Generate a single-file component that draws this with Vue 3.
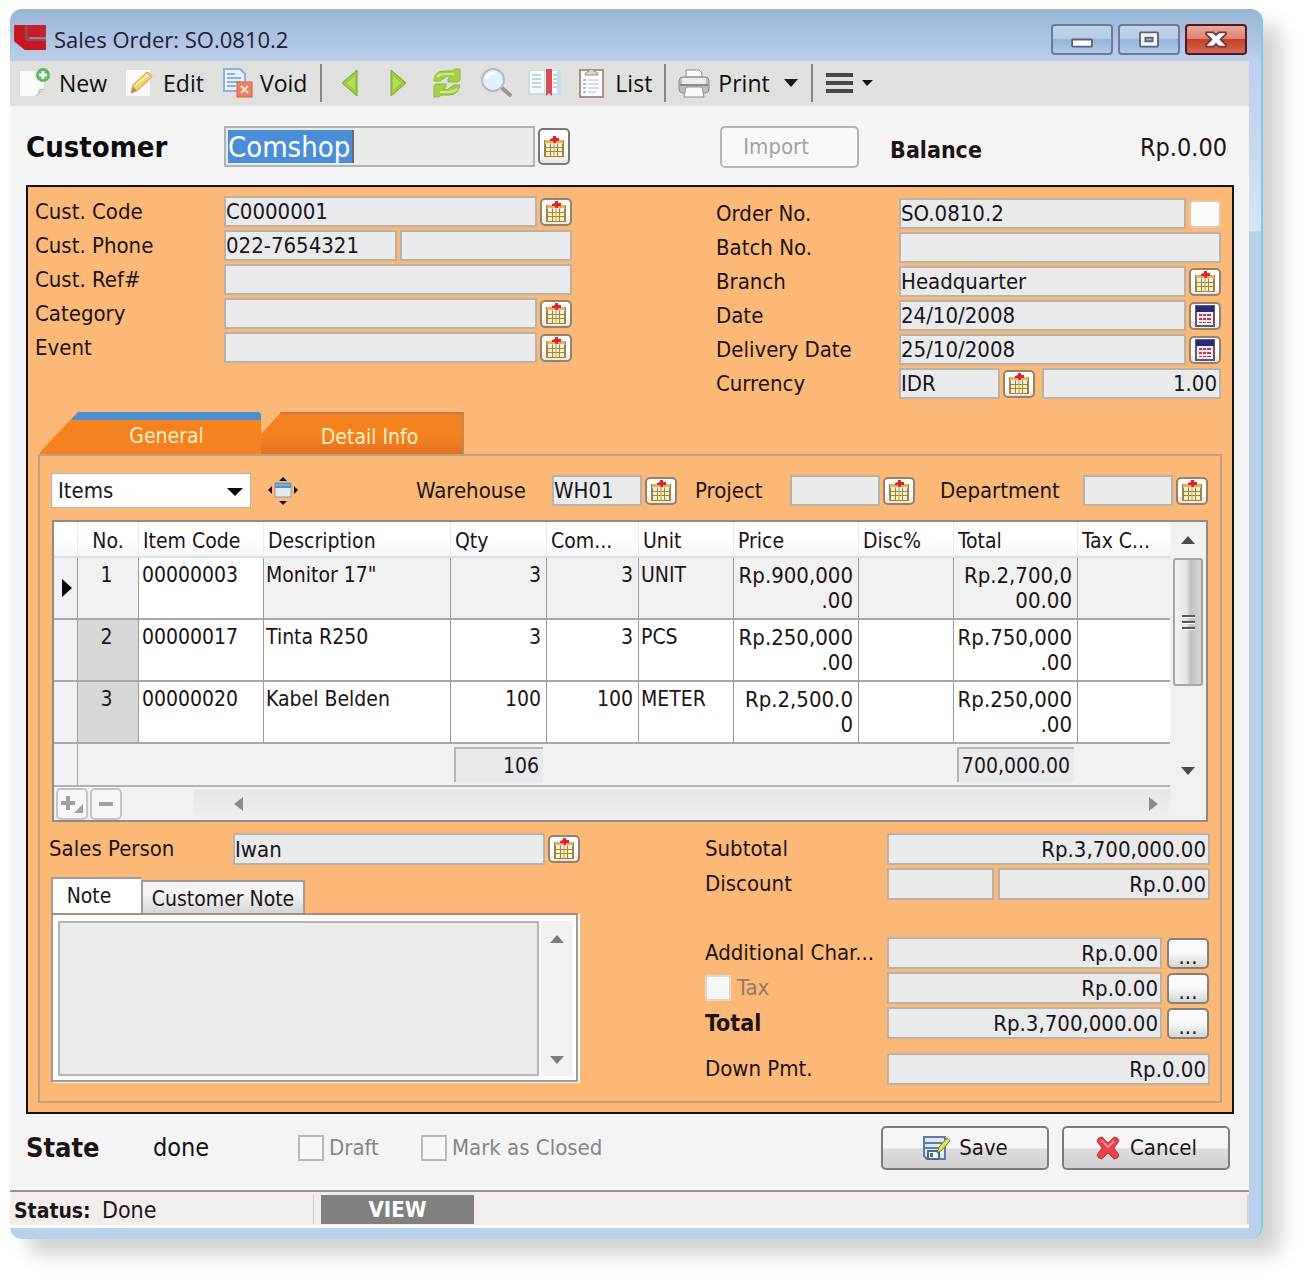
<script setup>
import { ref } from 'vue'

const leftFields = [
  { label: 'Cust. Code', id: 'cust-code', value: 'C0000001', lookup: true },
  { label: 'Cust. Phone', id: 'cust-phone', value: '022-7654321', second: true },
  { label: 'Cust. Ref#', id: 'cust-ref', value: '' },
  { label: 'Category', id: 'category', value: '', lookup: true },
  { label: 'Event', id: 'event', value: '', lookup: true }
]

const rightFields = [
  { label: 'Order No.', id: 'order-no', value: 'SO.0810.2', button: 'blank' },
  { label: 'Batch No.', id: 'batch-no', value: '' },
  { label: 'Branch', id: 'branch', value: 'Headquarter', button: 'lookup' },
  { label: 'Date', id: 'date', value: '24/10/2008', button: 'calendar' },
  { label: 'Delivery Date', id: 'delivery-date', value: '25/10/2008', button: 'calendar' }
]

const columns = [
  { title: '', width: 24 },
  { title: 'No.', width: 61, center: true },
  { title: 'Item Code', width: 125 },
  { title: 'Description', width: 187 },
  { title: 'Qty', width: 96 },
  { title: 'Com...', width: 92 },
  { title: 'Unit', width: 95 },
  { title: 'Price', width: 125 },
  { title: 'Disc%', width: 95 },
  { title: 'Total', width: 124 },
  { title: 'Tax C...', width: 94 }
]

const items = [
  { code: '00000003', name: 'Monitor 17"', qty: 3, com: 3, unit: 'UNIT', price: 'Rp.900,000.00', total: 'Rp.2,700,000.00' },
  { code: '00000017', name: 'Tinta R250', qty: 3, com: 3, unit: 'PCS', price: 'Rp.250,000.00', total: 'Rp.750,000.00' },
  { code: '00000020', name: 'Kabel Belden', qty: 100, com: 100, unit: 'METER', price: 'Rp.2,500.00', total: 'Rp.250,000.00' }
]

const current = ref(0)
const customer = ref('Comshop')
</script>

<template>
  <svg class="defs" aria-hidden="true">
    <symbol id="i-lookup" viewBox="0 0 22 22">
      <rect x="1" y="4" width="20" height="17" fill="#a08248" />
      <rect x="2" y="4" width="18" height="4" fill="#f0b04c" />
      <path d="M3 7h4v4H3zM8 7h6v4H8zM15 7h4v4h-4z" fill="#e6f1ea" />
      <path d="M3 12h4v3H3zM8 12h6v3H8zM15 12h4v3h-4zM3 16h4v4H3zM8 16h6v4H8zM15 16h4v4h-4z" fill="#fbf2b8" />
      <path d="M11 6v15" stroke="#b99c5c" stroke-width="1" />
      <path d="M10 0h3v2h3v3h-3v2h-2l-1-2H7V3l3-1z" fill="#e0202c" />
    </symbol>
    <symbol id="i-calendar" viewBox="0 0 22 22">
      <rect x="2" y="1" width="18" height="20" fill="#f7e9ec" stroke="#5c5a6b" stroke-width="2" />
      <rect x="2" y="1" width="18" height="6" fill="#262a78" />
      <path d="M5 9h3v2H5zM9 9h3v2H9zM13 9h4v2h-4zM5 13h3v2H5zM9 13h3v2H9zM13 13h4v2h-4zM5 17h3v1H5zM9 17h3v1H9zM13 17h4v1h-4z" fill="#b23a52" />
    </symbol>
  </svg>

  <main class="window">
    <header class="titlebar">
      <svg class="logo" viewBox="0 0 34 28" aria-hidden="true">
        <path d="M10 1h6v14h17v4H14q-4 0-4-5z" fill="#8f4a5c" />
        <path d="M0 1h11v13q0 4 4 4h18v9H11L0 18z" fill="#c8151f" />
        <path d="M14 1h19v13H17q-3 0-3-3z" fill="#c4202a" />
      </svg>
      <h1>Sales Order: SO.0810.2</h1>
      <div class="window-buttons">
        <button aria-label="Minimize">
          <svg viewBox="0 0 60 30"><rect x="19" y="15" width="22" height="8" rx="1" fill="#fff" stroke="#56617a" stroke-width="2" /></svg>
        </button>
        <button aria-label="Maximize">
          <svg viewBox="0 0 60 30"><rect x="20" y="7" width="20" height="16" rx="1" fill="#f6f6f8" stroke="#56617a" stroke-width="2" /><rect x="26" y="13" width="8" height="4" fill="#9fb6d4" stroke="#56617a" stroke-width="2" /></svg>
        </button>
        <button class="close" aria-label="Close">
          <svg viewBox="0 0 60 30"><path d="M19 7h8l3 3 3-3h8v2l-6 6 6 6v2h-8l-3-3-3 3h-8v-2l6-6-6-6z" fill="#fff" stroke="#6c3f48" stroke-width="2" /></svg>
        </button>
      </div>
    </header>

    <nav class="toolbar">
      <button class="tool new">
        <svg width="32" height="30" viewBox="0 0 32 30"><path d="M1 3h24v18l-8 7H1z" fill="#fbfbf9" /><path d="M17 28q3-1 3-6l5-1z" fill="#d9dcd8" stroke="#b7bbb5" /><circle cx="24" cy="7" r="7" fill="#5fb95c" /><path d="M24 3v8M20 7h8" stroke="#fff" stroke-width="3" /></svg>
        <span>New</span>
      </button>
      <button class="tool edit">
        <svg width="30" height="30" viewBox="0 0 30 30"><rect x="1" y="2" width="24" height="26" fill="#fbfbf9" /><path d="M6 25l2-8L22 4l5 5-14 13z" fill="#f3cf6a" stroke="#c99a3c" /><path d="M10 18L24 6" stroke="#fff0b4" stroke-width="2" /><path d="M21 5l3-1 4 4-2 2z" fill="#dcbba0" /><path d="M6 25l2-6 4 4z" fill="#a88f70" /></svg>
        <span>Edit</span>
      </button>
      <button class="tool void">
        <svg width="32" height="30" viewBox="0 0 32 30"><path d="M2 1h16l5 5v17H2z" fill="#e8f1fb" stroke="#8eb0dc" stroke-width="2" /><path d="M5 6h8M5 10h14M5 14h14M5 18h9" stroke="#8eb0dc" stroke-width="2" /><rect x="15" y="14" width="15" height="15" fill="#e8825f" stroke="#d9603c" /><path d="M19 18l7 7M26 18l-7 7" stroke="#fbe3da" stroke-width="2" /></svg>
        <span>Void</span>
      </button>
      <i class="divider"></i>
      <button class="tool arrow" aria-label="Previous"><svg width="20" height="30" viewBox="0 0 20 30"><path d="M17 2v26L2 15z" fill="#9bcc3c" stroke="#7aa63e" /><path d="M15 8v14L7 15z" fill="#b9de55" /></svg></button>
      <button class="tool arrow" aria-label="Next"><svg width="20" height="30" viewBox="0 0 20 30"><path d="M3 2v26l15-13z" fill="#9bcc3c" stroke="#7aa63e" /><path d="M5 8v14l8-7z" fill="#b9de55" /></svg></button>
      <button class="tool refresh" aria-label="Refresh"><svg width="30" height="30" viewBox="0 0 30 30"><path d="M2 12Q3 3 12 3h8l3-2h5v11l-2 2H16v-3l3-2q-5-2-8 2l-3 2H2z" fill="#a7cf45" stroke="#8ab73d" /><path d="M28 17q-2 10-11 10h-7l-4 2H2V18l2-2h10v3l-3 2q5 2 8-2l3-2z" fill="#a7cf45" stroke="#8ab73d" /><path d="M5 9q3-3 8-3h9M25 21q-3 3-8 3H8" fill="none" stroke="#d2e98b" stroke-width="2" /></svg></button>
      <button class="tool search" aria-label="Search"><svg width="34" height="30" viewBox="0 0 34 30"><path d="M22 19l9 8" stroke="#98989c" stroke-width="4" stroke-linecap="round" /><circle cx="14" cy="12" r="11" fill="#e4effb" stroke="#b6b9c6" stroke-width="2" /><path d="M7 11q2-6 9-6" fill="none" stroke="#fff" stroke-width="3" /></svg></button>
      <button class="tool book" aria-label="Bookmark"><svg width="34" height="30" viewBox="0 0 34 30"><rect x="0" y="2" width="33" height="25" fill="#c3e0ea" /><path d="M2 3h14v22H2zM17 3h12v22H17z" fill="#f8fafa" /><path d="M4 7h9M4 11h9M4 15h9M4 19h9M25 7h4M25 11h4M25 15h4M25 19h4" stroke="#c4d4da" stroke-width="2" /><path d="M18 1h6v27l-3-3-3 3z" fill="#e04a55" /></svg></button>
      <button class="tool list">
        <svg width="26" height="30" viewBox="0 0 26 30"><rect x="1" y="2" width="23" height="27" fill="#fcfdfb" stroke="#b08f82" stroke-width="2" /><path d="M6 7q0-3 4-4 2-4 5 0 4 1 4 4z" fill="#d8d5ce" stroke="#96918b" /><path d="M4 12h3M4 16h3M4 20h3M4 24h3" stroke="#9cc8bc" stroke-width="2" /><path d="M9 12h11M9 16h11M9 20h11M9 24h8" stroke="#d3e0e5" stroke-width="2" /></svg>
        <span>List</span>
      </button>
      <i class="divider"></i>
      <button class="tool print">
        <svg width="32" height="30" viewBox="0 0 32 30"><path d="M8 9V2h13l3 3v4z" fill="#fbfbfb" stroke="#8f8f8f" /><rect x="1" y="9" width="30" height="16" rx="4" fill="#bdbdbd" stroke="#8a8a8a" /><path d="M4 10h24v6H4z" fill="#ececec" /><path d="M2 17h28" stroke="#8b8b8b" stroke-width="2" /><path d="M8 19h16l2 10H6z" fill="#f8f8f8" stroke="#8f8f8f" /></svg>
        <span>Print</span>
        <svg width="14" height="8" viewBox="0 0 14 8"><path d="M0 0h14L7 8z" fill="#1a1a1a" /></svg>
      </button>
      <i class="divider"></i>
      <button class="tool menu" aria-label="Menu">
        <svg width="48" height="20" viewBox="0 0 48 20"><path d="M0 2h27M0 10h27M0 18h27" stroke="#474747" stroke-width="4" /><path d="M36 7h11l-6 6z" fill="#111" /></svg>
      </button>
    </nav>

    <section class="customer">
      <label class="big" for="customer">Customer</label>
      <div class="group">
        <div class="field"><input id="customer" v-model="customer" readonly /></div>
        <button class="pick" aria-label="Find customer"><svg><use href="#i-lookup" /></svg></button>
      </div>
      <button class="import" disabled>Import</button>
      <strong class="balance">Balance</strong>
      <output class="balance-value">Rp.0.00</output>
    </section>

    <section class="order">
      <div class="form">
        <div class="stack">
          <div v-for="f in leftFields" :key="f.id" class="row">
            <label :for="f.id">{{ f.label }}</label>
            <div class="group">
              <input :id="f.id" class="box" :value="f.value" readonly />
              <input v-if="f.second" class="box" aria-label="Second phone" readonly />
              <button v-if="f.lookup" class="pick" :aria-label="'Find ' + f.label"><svg><use href="#i-lookup" /></svg></button>
            </div>
          </div>
        </div>
        <div class="stack right">
          <div v-for="f in rightFields" :key="f.id" class="row">
            <label :for="f.id">{{ f.label }}</label>
            <div class="group">
              <input :id="f.id" class="box" :value="f.value" readonly />
              <button v-if="f.button" class="pick" :class="f.button" :aria-label="'Choose ' + f.label">
                <svg v-if="f.button !== 'blank'"><use :href="'#i-' + f.button" /></svg>
              </button>
            </div>
          </div>
          <div class="row">
            <label for="currency">Currency</label>
            <div class="group">
              <input id="currency" class="box code" value="IDR" readonly />
              <button class="pick" aria-label="Find currency"><svg><use href="#i-lookup" /></svg></button>
              <input class="box number rate" aria-label="Exchange rate" value="1.00" readonly />
            </div>
          </div>
        </div>
      </div>

      <div class="tabs" role="tablist">
        <button class="tab active" role="tab" aria-selected="true">General</button>
        <button class="tab detail" role="tab" aria-selected="false">Detail Info</button>
      </div>

      <div class="sheet">
        <div class="filters">
          <div class="select-wrap">
            <select aria-label="Line type"><option>Items</option></select>
            <svg width="16" height="8" viewBox="0 0 16 8" aria-hidden="true"><path d="M0 0h16L8 8z" fill="#0a0a0a" /></svg>
          </div>
          <button class="resize" aria-label="Resize columns">
            <svg width="32" height="28" viewBox="0 0 32 28"><path d="M16 0l4 4h-8zM16 28l4-4h-8zM1 13l4-4v8zM31 13l-4-4v8z" fill="#111" /><rect x="8" y="6" width="16" height="14" fill="#e3eaef" stroke="#8c98a3" /><rect x="8" y="6" width="16" height="5" fill="#4f93cf" /><path d="M9 8h14" stroke="#a5cdf0" /></svg>
          </button>
          <label class="wh" for="warehouse">Warehouse</label>
          <div class="group short"><input id="warehouse" class="box" value="WH01" readonly /><button class="pick" aria-label="Find warehouse"><svg><use href="#i-lookup" /></svg></button></div>
          <label class="pj" for="project">Project</label>
          <div class="group short"><input id="project" class="box" readonly /><button class="pick" aria-label="Find project"><svg><use href="#i-lookup" /></svg></button></div>
          <label class="dp" for="department">Department</label>
          <div class="group short"><input id="department" class="box" readonly /><button class="pick" aria-label="Find department"><svg><use href="#i-lookup" /></svg></button></div>
        </div>

        <div class="grid">
          <table>
            <colgroup><col v-for="c in columns" :key="c.title" :style="{ width: c.width + 'px' }" /></colgroup>
            <thead>
              <tr><th v-for="c in columns" :key="c.title" :class="{ center: c.center }">{{ c.title }}</th></tr>
            </thead>
            <tbody>
              <tr v-for="(item, i) in items" :key="item.code" :class="{ selected: i === current }">
                <td class="marker"><svg v-if="i === current" width="10" height="18" viewBox="0 0 10 18"><path d="M0 0l10 9-10 9z" fill="#050505" /></svg></td>
                <td class="index">{{ i + 1 }}</td>
                <td class="item-code">{{ item.code }}</td>
                <td>{{ item.name }}</td>
                <td class="num">{{ item.qty }}</td>
                <td class="num">{{ item.com }}</td>
                <td>{{ item.unit }}</td>
                <td class="num money">{{ item.price }}</td>
                <td></td>
                <td class="num money">{{ item.total }}</td>
                <td></td>
              </tr>
            </tbody>
            <tfoot>
              <tr>
                <td class="marker"></td>
                <td colspan="3"></td>
                <td class="sum"><span>106</span></td>
                <td colspan="4"></td>
                <td class="sum"><span>700,000.00</span></td>
                <td></td>
              </tr>
            </tfoot>
          </table>
          <div class="vscroll">
            <svg width="14" height="8" viewBox="0 0 14 8"><path d="M0 8h14L7 0z" fill="#4a4a4a" /></svg>
            <div class="thumb"><i></i><i></i><i></i></div>
            <svg class="down" width="14" height="8" viewBox="0 0 14 8"><path d="M0 0h14L7 8z" fill="#4a4a4a" /></svg>
          </div>
          <div class="grid-bar">
            <button class="row-btn" aria-label="Add row" disabled><svg width="24" height="20" viewBox="0 0 24 20"><path d="M8 2v14M1 9h14" stroke="#a0a0a0" stroke-width="4" /><path d="M23 10v9h-9z" fill="#a0a0a0" /></svg></button>
            <button class="row-btn" aria-label="Remove row" disabled><svg width="16" height="20" viewBox="0 0 16 20"><path d="M1 10h14" stroke="#a0a0a0" stroke-width="4" /></svg></button>
            <div class="hscroll">
              <svg width="9" height="14" viewBox="0 0 9 14"><path d="M9 0v14L0 7z" fill="#8c8c8c" /></svg>
              <svg width="9" height="14" viewBox="0 0 9 14"><path d="M0 0v14l9-7z" fill="#8c8c8c" /></svg>
            </div>
          </div>
        </div>

        <div class="summary">
          <div class="people">
            <div class="row sales">
              <label for="sales">Sales Person</label>
              <div class="group"><input id="sales" class="box" value="Iwan" readonly /><button class="pick" aria-label="Find sales person"><svg><use href="#i-lookup" /></svg></button></div>
            </div>
            <div class="note-tabs" role="tablist">
              <button class="note-tab on" role="tab" aria-selected="true">Note</button>
              <button class="note-tab" role="tab" aria-selected="false">Customer Note</button>
            </div>
            <div class="note-box">
              <textarea aria-label="Note" readonly></textarea>
              <div class="note-scroll">
                <svg width="14" height="8" viewBox="0 0 14 8"><path d="M0 8h14L7 0z" fill="#7d7d7d" /></svg>
                <svg width="14" height="8" viewBox="0 0 14 8"><path d="M0 0h14L7 8z" fill="#7d7d7d" /></svg>
              </div>
            </div>
          </div>

          <div class="totals">
            <div class="row">
              <label for="subtotal">Subtotal</label>
              <div class="group"><input id="subtotal" class="box number" value="Rp.3,700,000.00" readonly /></div>
            </div>
            <div class="row">
              <label for="discount">Discount</label>
              <div class="group wide-gap"><input class="box percent" aria-label="Discount percent" readonly /><input id="discount" class="box number" value="Rp.0.00" readonly /></div>
            </div>
            <div class="row charges">
              <label for="charges">Additional Char...</label>
              <div class="group with-more"><input id="charges" class="box number" value="Rp.0.00" readonly /><button class="more" aria-label="Charge details">...</button></div>
            </div>
            <div class="row">
              <label class="tax"><input type="checkbox" class="check plain" disabled />Tax</label>
              <div class="group with-more"><input class="box number" aria-label="Tax amount" value="Rp.0.00" readonly /><button class="more" aria-label="Tax details">...</button></div>
            </div>
            <div class="row">
              <label class="strong" for="total">Total</label>
              <div class="group with-more"><input id="total" class="box number" value="Rp.3,700,000.00" readonly /><button class="more" aria-label="Total details">...</button></div>
            </div>
            <div class="row down-pmt">
              <label for="down">Down Pmt.</label>
              <div class="group"><input id="down" class="box number" value="Rp.0.00" readonly /></div>
            </div>
          </div>
        </div>
      </div>
    </section>

    <footer class="actions">
      <strong class="state">State</strong>
      <span class="state-value">done</span>
      <label class="opt draft"><input type="checkbox" class="check" disabled />Draft</label>
      <label class="opt"><input type="checkbox" class="check" disabled />Mark as Closed</label>
      <button class="action first">
        <svg width="28" height="26" viewBox="0 0 28 26"><path d="M2 2h21v22H5l-3-3z" fill="#dfe9f2" stroke="#5f7d9f" stroke-width="2" /><path d="M3 8h17M3 13h17" stroke="#5f7d9f" stroke-width="2" /><rect x="6" y="16" width="11" height="8" fill="#f6f8fa" stroke="#4a6b91" stroke-width="2" /><rect x="8" y="18" width="3" height="4" fill="#4a6b91" /><path d="M15 18l2-6 8-9 3 3-8 9z" fill="#e2e04c" stroke="#6c7a48" /></svg>
        <span>Save</span>
      </button>
      <button class="action">
        <svg width="26" height="26" viewBox="0 0 26 26"><path d="M2 6q1-4 5-4l6 6 6-6q4 0 5 4l-5 7 5 7q-1 4-5 4l-6-6-6 6q-4 0-5-4l5-7z" fill="#e8404d" stroke="#c9303c" /><path d="M6 5l7 7 6-6" fill="none" stroke="#f58a90" stroke-width="2" /></svg>
        <span>Cancel</span>
      </button>
    </footer>

    <div class="statusbar">
      <p><b>Status:</b> <span>Done</span></p>
      <strong class="mode">VIEW</strong>
      <i class="rest"></i>
    </div>
  </main>
</template>

<style>
body {
  margin: 0;
  background: #fff;
}
#app {
  overflow: hidden;
}
</style>

<style scoped>
* {
  box-sizing: border-box;
}
.defs {
  position: absolute;
  width: 0;
  height: 0;
}
.window {
  margin: 9px 45px 46px 10px;
  padding: 0 12px 11px 0;
  border-right: 2px solid #7ccbe9;
  border-radius: 12px;
  background: linear-gradient(#9ab5d5, #bccfeb 52px, #d5e5f5 222px, #b8d1ea 223px, #b8d1ea);
  box-shadow: 18px 16px 20px rgba(0, 0, 0, 0.18);
  font: 22px/26px "DejaVu Sans Condensed", "Noto Sans", sans-serif;
  color: #1c1416;
}
button,
input,
select,
textarea {
  font: inherit;
  color: inherit;
  margin: 0;
  padding: 0;
  border-radius: 0;
}
button {
  flex: none;
}
svg {
  display: block;
  flex: none;
}

/* title bar */
.titlebar {
  display: flex;
  align-items: center;
  height: 52px;
  padding: 8px 2px 0 4px;
}
.logo {
  width: 33px;
  height: 27px;
  margin-bottom: 4px;
}
h1 {
  margin: 0 0 0 7px;
  font: 22px/30px "Open Sans", sans-serif;
  color: #1b2230;
}
.window-buttons {
  display: flex;
  gap: 5px;
  margin-left: auto;
}
.window-buttons button {
  width: 62px;
  height: 31px;
  border: 2px solid #687b9b;
  border-radius: 4px;
  background: linear-gradient(#c4d5ea, #b5cbe5 48%, #96b3d5 50%, #b0cbe6);
}
.window-buttons .close {
  border-color: #4b1a26;
  background: linear-gradient(#eba79c, #dd8273 48%, #c43f27 50%, #d66a52);
}
.window-buttons svg {
  width: 100%;
  height: 100%;
}

/* toolbar */
.toolbar {
  display: flex;
  align-items: center;
  height: 45px;
  padding: 0 0 2px 9px;
  background: #e0e0df;
  font: 23px/30px "Open Sans", sans-serif;
  color: #0e0e10;
}
.tool {
  display: flex;
  align-items: center;
  gap: 8px;
  border: 0;
  background: none;
}
.edit {
  margin-left: 18px;
}
.void {
  gap: 6px;
  margin-left: 18px;
}
.divider {
  width: 2px;
  height: 38px;
  background: #858585;
}
.void + .divider {
  margin: 0 18px 0 13px;
}
.arrow {
  margin-right: 28px;
}
.refresh {
  margin: 0 17px 0 -4px;
}
.search {
  margin-right: 15px;
}
.book {
  margin-right: 17px;
}
.list {
  gap: 10px;
}
.list + .divider {
  margin: 0 12px;
}
.print > svg:last-child {
  margin-left: 6px;
}
.print + .divider {
  margin: 0 13px;
}

/* customer line */
.customer {
  display: grid;
  grid-template-columns: 198px minmax(0, 346fr) 150px 139px 31px auto minmax(0, 245fr);
  align-items: center;
  height: 79px;
  padding: 2px 22px 0 16px;
}
.big {
  font-size: 29px;
  font-weight: bold;
  line-height: 34px;
  color: #0c0c0e;
}
.customer,
.actions {
  background: #f5f4f4;
}
.group {
  display: flex;
  align-items: center;
  gap: 3px;
  min-width: 0;
}
.field {
  flex: 1;
  min-width: 0;
  display: flex;
  height: 41px;
  padding: 2px;
  border: 2px solid #b0b3b3;
  background: #e9eaea;
}
.field input {
  width: 126px;
  height: 33px;
  border: 0;
  border-right: 2px solid #666b73;
  background: #4a8fd6;
  color: #fff;
  font-size: 29px;
  outline: none;
}
.pick {
  display: flex;
  align-items: center;
  justify-content: center;
  width: 32px;
  height: 28px;
  border: 2px solid #92836f;
  border-radius: 5px;
  background: linear-gradient(#fff 55%, #e9e6e2);
}
.pick svg {
  width: 22px;
  height: 22px;
}
.customer .pick {
  height: 37px;
  border-color: #777;
}
.import {
  grid-column: 4;
  height: 42px;
  padding-right: 27px;
  border: 2px solid #b5b5b5;
  border-radius: 5px;
  background: #f8f8f9;
  color: #a3a3a5;
}
.balance {
  grid-column: 6;
  padding-top: 6px;
  font-size: 23px;
}
.balance-value {
  padding-top: 3px;
  text-align: right;
  font-size: 25px;
}

/* order panel */
.order {
  margin: 0 15px 0 16px;
  border: 2px solid #18120f;
  background: #fcb877;
  box-shadow: -16px 0 #f5f4f4, 15px 0 #f5f4f4;
}
.form {
  display: grid;
  grid-template-columns: minmax(0, 537fr) minmax(0, 505fr);
  column-gap: 144px;
  padding: 9px 11px 0 7px;
}
.stack {
  display: flex;
  flex-direction: column;
  gap: 3px;
}
.stack.right {
  padding-top: 2px;
}
.row {
  display: grid;
  grid-template-columns: 189px minmax(0, 1fr);
  align-items: center;
}
.right .row {
  grid-template-columns: 183px minmax(0, 1fr);
}
.row label {
  white-space: nowrap;
}
.box {
  flex: 1;
  min-width: 0;
  width: 0;
  height: 31px;
  padding: 0 2px 0 0;
  border: 2px solid #b8b2aa;
  background: #eaeaea;
  outline: none;
  color: #17141d;
}
.number {
  text-align: right;
}
.blank {
  border-color: #e3c9a9;
  background: #fdfcfb;
}
.code {
  flex: 0 0 101px;
}
.rate {
  margin-left: 4px;
}

/* sheet tabs */
.tabs {
  display: flex;
  height: 42px;
  margin: 13px 0 0 12px;
}
.tab {
  border: 0;
  padding: 5px 0 0;
  color: #fff1c0;
  font-size: 21px;
}
.active {
  width: 221px;
  padding-left: 32px;
  background: linear-gradient(#4a8fd0 8px, #f58220 8px);
  clip-path: polygon(38px 0, 219px 0, 221px 2px, 221px 100%, 0 100%, 0 40px);
}
.detail {
  width: 203px;
  padding-left: 16px;
  border-top: 2px solid #bc7f4c;
  border-right: 2px solid #bc8a5c;
  background: linear-gradient(#f58220 55%, #e37022);
  clip-path: polygon(20px 0, 100% 0, 100% 100%, 0 100%, 0 22px);
}
.sheet {
  margin: 0 10px 9px;
  padding-bottom: 16px;
  border: 2px solid #c0a080;
}
.filters {
  display: flex;
  align-items: center;
  padding: 17px 12px 0 11px;
}
.select-wrap {
  position: relative;
  width: 200px;
}
.select-wrap select {
  display: block;
  width: 100%;
  height: 35px;
  padding-left: 6px;
  appearance: none;
  border: 1px solid #b5b1ac;
  background: #fff;
}
.select-wrap svg {
  position: absolute;
  right: 8px;
  top: 15px;
  pointer-events: none;
}
.resize {
  margin: 0 auto 0 16px;
  border: 0;
  background: none;
}
.wh {
  width: 136px;
}
.pj {
  width: 95px;
  margin-left: 18px;
}
.dp {
  width: 143px;
  margin-left: 25px;
}
.short .box {
  flex: 0 0 90px;
}

/* items grid */
.grid {
  display: grid;
  grid-template-columns: minmax(0, 1fr) 36px;
  margin: 12px 12px 0;
  border: 2px solid #8e8c88;
  background: #f2f1f1;
}
table {
  width: 100%;
  table-layout: fixed;
  border-collapse: separate;
  border-spacing: 0;
  font-size: 21px;
  line-height: 25px;
}
th {
  height: 36px;
  padding: 5px 0 0 4px;
  text-align: left;
  font-weight: normal;
  white-space: nowrap;
  border-right: 1px solid #ebebed;
  border-bottom: 2px solid #dedede;
  background: linear-gradient(#fff 50%, #f4f5f7);
}
th.center {
  padding-right: 4px;
  text-align: center;
}
tbody td {
  height: 62px;
  padding: 5px 5px 5px 2px;
  vertical-align: top;
  line-break: anywhere;
  border-right: 1px solid #9b9b9b;
  border-bottom: 2px solid #a8a8a8;
  background: #fff;
}
tbody .selected td {
  background: #f1f1f1;
}
tbody .selected .item-code {
  background: #fff;
}
tbody .index {
  background: #d8d8d8;
  text-align: center;
}
.item-code {
  padding-left: 3px;
}
.num {
  text-align: right;
}
.money {
  font-size: 22px;
}
tbody .marker,
tfoot .marker {
  padding: 0 0 0 8px;
  vertical-align: middle;
  background: #f2f2f2;
}
tfoot .marker {
  border-right: 1px solid #a8a8a8;
}
tfoot td {
  height: 43px;
  padding: 0;
  border-bottom: 2px solid #b4b4b4;
}
.sum span {
  display: block;
  height: 35px;
  margin: 0 4px 0 3px;
  padding: 5px 4px 0 0;
  border-top: 2px solid #b3b5b7;
  border-left: 2px solid #b3b5b7;
  background: #e9eaeb;
  text-align: right;
  white-space: nowrap;
  overflow: hidden;
}
.vscroll {
  grid-row: span 2;
  grid-column: 2;
  display: flex;
  flex-direction: column;
  align-items: center;
  padding: 14px 2px 45px;
  background: #f0f0f0;
}
.thumb {
  display: flex;
  flex-direction: column;
  justify-content: center;
  align-items: center;
  gap: 3px;
  width: 30px;
  height: 128px;
  margin-top: 14px;
  border: 2px solid #a5a5a5;
  border-radius: 3px;
  background: linear-gradient(90deg, #f4f4f4, #e4e4e6 45%, #bfc0c3 60%, #d5d5d7);
}
.thumb i {
  width: 13px;
  height: 3px;
  border-top: 2px solid #55565c;
  background: #fff;
}
.down {
  margin-top: auto;
}
.grid-bar {
  display: flex;
  align-items: center;
  gap: 2px;
  height: 33px;
  padding-left: 2px;
}
.row-btn {
  display: flex;
  align-items: center;
  justify-content: center;
  width: 32px;
  height: 32px;
  border: 2px solid #c5c5c5;
  border-radius: 5px;
  background: #f7f7f7;
}
.hscroll {
  flex: 1;
  display: flex;
  align-items: center;
  justify-content: space-between;
  height: 30px;
  margin-left: 70px;
  padding: 0 12px 0 40px;
  background: linear-gradient(#e6e6e6, #efefef);
}

/* lower part */
.summary {
  display: grid;
  grid-template-columns: minmax(0, 531fr) minmax(0, 505fr);
  column-gap: 125px;
  margin: 11px 10px 0 9px;
}
.summary .box {
  height: 32px;
}
.row.sales {
  grid-template-columns: 184px minmax(0, 1fr);
}
.note-tabs {
  display: flex;
  align-items: flex-end;
  margin: 12px 0 0 2px;
}
.note-tab {
  height: 33px;
  width: 164px;
  padding-top: 3px;
  border: 2px solid #a09c9c;
  border-bottom: 0;
  background: linear-gradient(#f4f4f4 40%, #d5d5d8);
  font-size: 21px;
}
.note-tab.on {
  width: 90px;
  height: 36px;
  padding: 0 16px 0 0;
  border-right: 0;
  background: #fff;
}
.note-box {
  display: flex;
  gap: 2px;
  height: 169px;
  margin: 0 2px;
  padding: 6px 3px 4px 5px;
  border: 2px solid #a09c9c;
  border-top-color: #ab8c72;
  background: #fff;
  box-shadow: 2px 1px #fff;
}
.note-box textarea {
  flex: 1;
  min-width: 0;
  resize: none;
  border: 2px solid #b4b4b4;
  background: #eaeceb;
  outline: none;
}
.note-scroll {
  display: flex;
  flex-direction: column;
  align-items: center;
  justify-content: space-between;
  width: 32px;
  padding: 14px 0 12px;
  background: #f1f1f1;
}
.totals {
  display: flex;
  flex-direction: column;
  gap: 3px;
}
.totals .row {
  grid-template-columns: 182px minmax(0, 1fr);
}
.wide-gap {
  gap: 4px;
}
.percent {
  flex: 0 0 107px;
}
.totals .charges {
  margin-top: 34px;
}
.totals .down-pmt {
  margin-top: 11px;
}
.with-more {
  gap: 5px;
  padding-right: 1px;
}
.more {
  width: 42px;
  height: 31px;
  padding-top: 4px;
  border: 2px solid #85807a;
  border-radius: 5px;
  background: linear-gradient(#fafafa 45%, #d6d6d8);
}
.strong {
  font-size: 23px;
  font-weight: bold;
}
.tax {
  display: flex;
  align-items: center;
  gap: 6px;
  color: #8f7a68;
}
.check {
  appearance: none;
  width: 26px;
  height: 26px;
  border: 2px solid #b9b9b9;
  background: #f7f7f7;
}
.check.plain {
  border-color: #dfd8d0;
}

/* actions and status */
.actions {
  display: flex;
  align-items: center;
  padding: 12px 19px 20px 16px;
}
.state {
  width: 127px;
  font-size: 27px;
}
.state-value {
  width: 145px;
  font-size: 25px;
  color: #111;
}
.opt {
  display: flex;
  align-items: center;
  gap: 5px;
  color: #85858a;
}
.draft {
  width: 123px;
}
.action {
  display: flex;
  align-items: center;
  justify-content: center;
  gap: 9px;
  width: 168px;
  height: 44px;
  border: 2px solid #7d7d7d;
  border-radius: 5px;
  background: linear-gradient(#f6f6f6 50%, #dcdcdc 52%, #d2d2d2);
}
.first {
  margin: 0 13px 0 auto;
}
.statusbar {
  display: flex;
  align-items: stretch;
  height: 38px;
  padding: 3px 0 4px;
  border-top: 2px solid #969494;
  background: linear-gradient(#f2eeee 33px, #fff 33px);
}
.statusbar p {
  width: 304px;
  margin: 0 7px 0 0;
  padding: 2px 0 0 4px;
  border-right: 1px solid #d5d2d2;
}
.statusbar b {
  margin-right: 5px;
  font-size: 21px;
}
.statusbar span {
  font-size: 23px;
}
.mode {
  width: 153px;
  padding-top: 2px;
  background: #808080;
  color: #fff;
  text-align: center;
}
.rest {
  flex: 1;
  border-right: 2px solid #d5d5d8;
}
</style>
